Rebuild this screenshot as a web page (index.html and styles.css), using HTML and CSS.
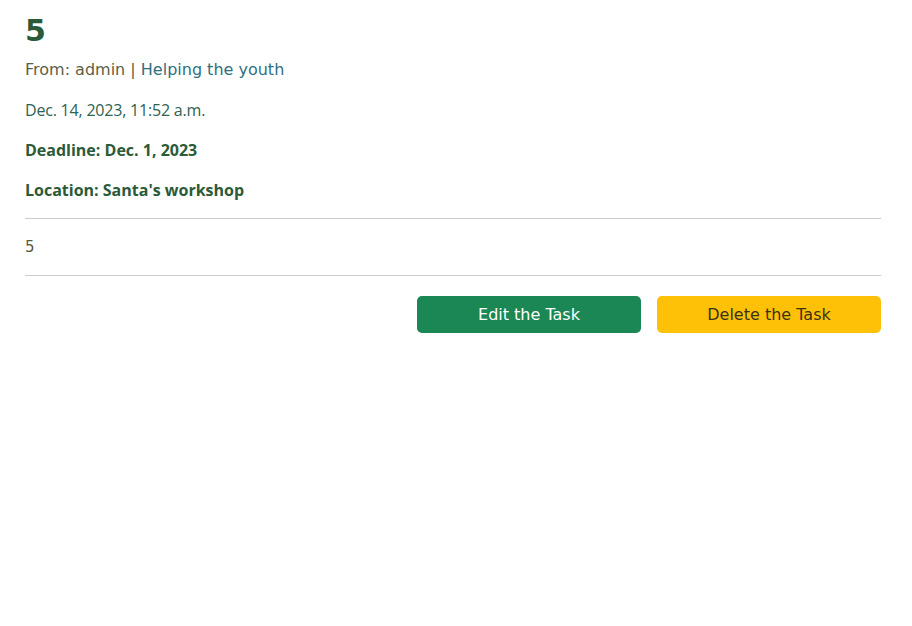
FILE: index.html
```html
<!DOCTYPE html>
<html lang="en">
<head>
<meta charset="utf-8">
<title>Task 5</title>
<link rel="stylesheet" href="styles.css">
</head>
<body>
<main class="task">
  <h2 class="task-title">5</h2>
  <p class="meta">From: admin | <span class="cause">Helping the youth</span></p>
  <p class="date">Dec. 14, 2023, 11:52 a.m.</p>
  <p class="strong">Deadline: Dec. 1, 2023</p>
  <p class="strong">Location: Santa's workshop</p>
  <hr class="rule">
  <p class="desc">5</p>
  <hr class="rule rule-last">
  <div class="actions">
    <a class="btn btn-edit" href="#">Edit the Task</a>
    <a class="btn btn-delete" href="#">Delete the Task</a>
  </div>
</main>
</body>
</html>
```

FILE: styles.css
```css
html, body {
  margin: 0;
  padding: 0;
  background: #ffffff;
}
body {
  font-family: "DejaVu Sans", "Open Sans", sans-serif;
  font-size: 16px;
  color: #4f5a3c;
}
.task {
  padding: 10px 31px 0 25px;
}
.task-title {
  margin: 0 0 6px 0;
  font-size: 30px;
  line-height: 42px;
  font-weight: bold;
  color: #2b5a38;
}
.task p {
  margin: 0 0 16px 0;
  line-height: 24px;
}
.meta {
  color: #5c5f45;
}
.cause {
  color: #2f6f80;
}
.task p.date {
  font-family: "Open Sans", "DejaVu Sans", sans-serif;
  letter-spacing: -0.2px;
  color: #2d6352;
}
.task p.strong {
  font-family: "Open Sans", "DejaVu Sans", sans-serif;
  font-weight: bold;
  font-size: 16px;
  color: #2b5a38;
}
.rule {
  border: 0;
  border-top: 1px solid #cccccc;
  margin: 16px 0 16px 0;
}
.rule-last {
  margin-bottom: 20px;
}
.task p.desc {
  margin: 0;
  font-size: 15px;
  color: #5a5840;
}
.actions {
  display: flex;
  justify-content: flex-end;
  gap: 16px;
}
.btn {
  display: flex;
  align-items: center;
  justify-content: center;
  width: 224px;
  height: 37px;
  box-sizing: border-box;
  border-radius: 5px;
  font-size: 16px;
  text-decoration: none;
}
.btn-edit {
  background: #1a8754;
  color: #ffffff;
}
.btn-delete {
  background: #ffc107;
  color: #3b3216;
}
```
